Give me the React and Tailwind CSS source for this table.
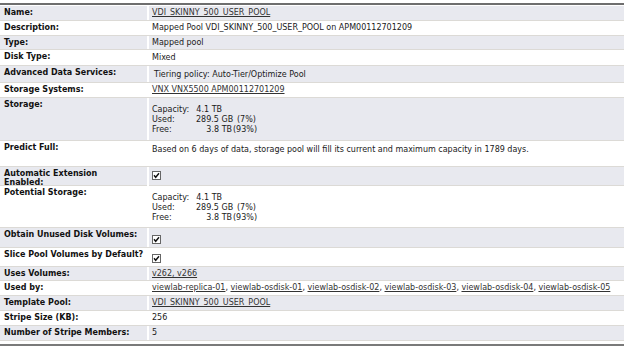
import React from 'react';

const font = "font-['DejaVu_Sans','Verdana',sans-serif]";

function Check() {
  return (
    <svg width="9" height="9" viewBox="0 0 9 9" className="block">
      <rect x="0.5" y="0.5" width="8" height="8" fill="#fff" stroke="#666" />
      <path d="M2 4.2 L3.7 6.3 L7 2.3" fill="none" stroke="#111" strokeWidth="1.4" />
    </svg>
  );
}

function Link({ children }) {
  return <span className="underline underline-offset-1 text-[#333]">{children}</span>;
}

function StorageTable() {
  const rows = [
    ['Capacity:', '4.1 TB', ''],
    ['Used:', '289.5 GB', '(7%)'],
    ['Free:', '3.8 TB', '(93%)'],
  ];
  return (
    <div className="grid grid-cols-[43px_36px_auto] gap-x-[1px] leading-[10px]">
      {rows.map(([k, v, p]) => (
        <React.Fragment key={k}>
          <span>{k}</span>
          <span className={'text-right whitespace-nowrap ' + (p ? '' : 'pr-[10px]')}>{v}</span>
          <span className={'whitespace-nowrap ' + (p === '(7%)' ? 'pl-[4px]' : '')}>{p}</span>
        </React.Fragment>
      ))}
    </div>
  );
}

// label, value, row height, value padding / alignment
const rows = [
  { label: 'Name:', h: 'h-[15px]', val: <Link>VDI_SKINNY_500_USER_POOL</Link>, v: 'items-center' },
  { label: 'Description:', h: 'h-[15px]', val: 'Mapped Pool VDI_SKINNY_500_USER_POOL on APM00112701209', v: 'items-center' },
  { label: 'Type:', h: 'h-[14px]', val: 'Mapped pool', v: 'items-center' },
  { label: 'Disk Type:', h: 'h-[16px]', val: 'Mixed', v: 'items-center' },
  { label: 'Advanced Data Services:', h: 'h-[17px]', val: <span className="pl-[2px]">Tiering policy: Auto-Tier/Optimize Pool</span>, v: 'items-center pt-[2px]' },
  { label: 'Storage Systems:', h: 'h-[15px]', val: <Link>VNX VNX5500 APM00112701209</Link>, v: 'items-center' },
  { label: 'Storage:', h: 'h-[43px]', val: <StorageTable />, v: 'items-center pt-[2px]' },
  { label: 'Predict Full:', h: 'h-[26px]', val: 'Based on 6 days of data, storage pool will fill its current and maximum capacity in 1789 days.', v: 'items-start pt-[4px]' },
  { label: <>Automatic Extension<br />Enabled:</>, h: 'h-[19px]', val: <Check />, v: 'items-start pt-[4px] pl-[2px]' },
  { label: 'Potential Storage:', h: 'h-[42px]', val: <StorageTable />, v: 'items-center pt-[2px]' },
  { label: 'Obtain Unused Disk Volumes:', h: 'h-[20px]', val: <Check />, v: 'items-center pt-[3px] pl-[2px]' },
  { label: 'Slice Pool Volumes by Default?', h: 'h-[19px]', val: <Check />, v: 'items-center pt-[3px] pl-[2px]' },
  { label: 'Uses Volumes:', h: 'h-[14px]', val: <Link>v262, v266</Link>, v: 'items-center' },
  {
    label: 'Used by:', h: 'h-[15px]', v: 'items-center',
    val: (
      <span>
        <Link>viewlab-replica-01</Link>, <Link>viewlab-osdisk-01</Link>, <Link>viewlab-osdisk-02</Link>,{' '}
        <Link>viewlab-osdisk-03</Link>, <Link>viewlab-osdisk-04</Link>, <Link>viewlab-osdisk-05</Link>
      </span>
    ),
  },
  { label: 'Template Pool:', h: 'h-[15px]', val: <Link>VDI_SKINNY_500_USER_POOL</Link>, v: 'items-center' },
  { label: 'Stripe Size (KB):', h: 'h-[15px]', val: '256', v: 'items-center' },
  { label: 'Number of Stripe Members:', h: 'h-[15px]', val: '5', v: 'items-center' },
];

export default function App() {
  return (
    <div className={`w-[624px] h-[347px] bg-white overflow-hidden text-[8px] text-[#1a1a1a] ${font}`}>
      <div className="mt-[3px] h-[2px] bg-[#6e6e6e]" />
      <div className="mt-[1px] flex flex-col">
        {rows.map((r, i) => (
          <div
            key={i}
            className={`grid grid-cols-[147px_1fr] border-b border-[#dcdad6] ${r.h} ${i % 2 === 0 ? 'bg-[#e8e9ef]' : 'bg-white'}`}
          >
            <div className="pl-[4px] pt-[2px] font-bold leading-[9px] text-[#111] whitespace-nowrap">{r.label}</div>
            <div className={`flex border-l-2 border-white pl-[3px] leading-[10px] whitespace-nowrap ${r.v}`}>{r.val}</div>
          </div>
        ))}
      </div>
      <div className="mt-[3px] h-[2px] bg-[#7a7a7a]" />
    </div>
  );
}
